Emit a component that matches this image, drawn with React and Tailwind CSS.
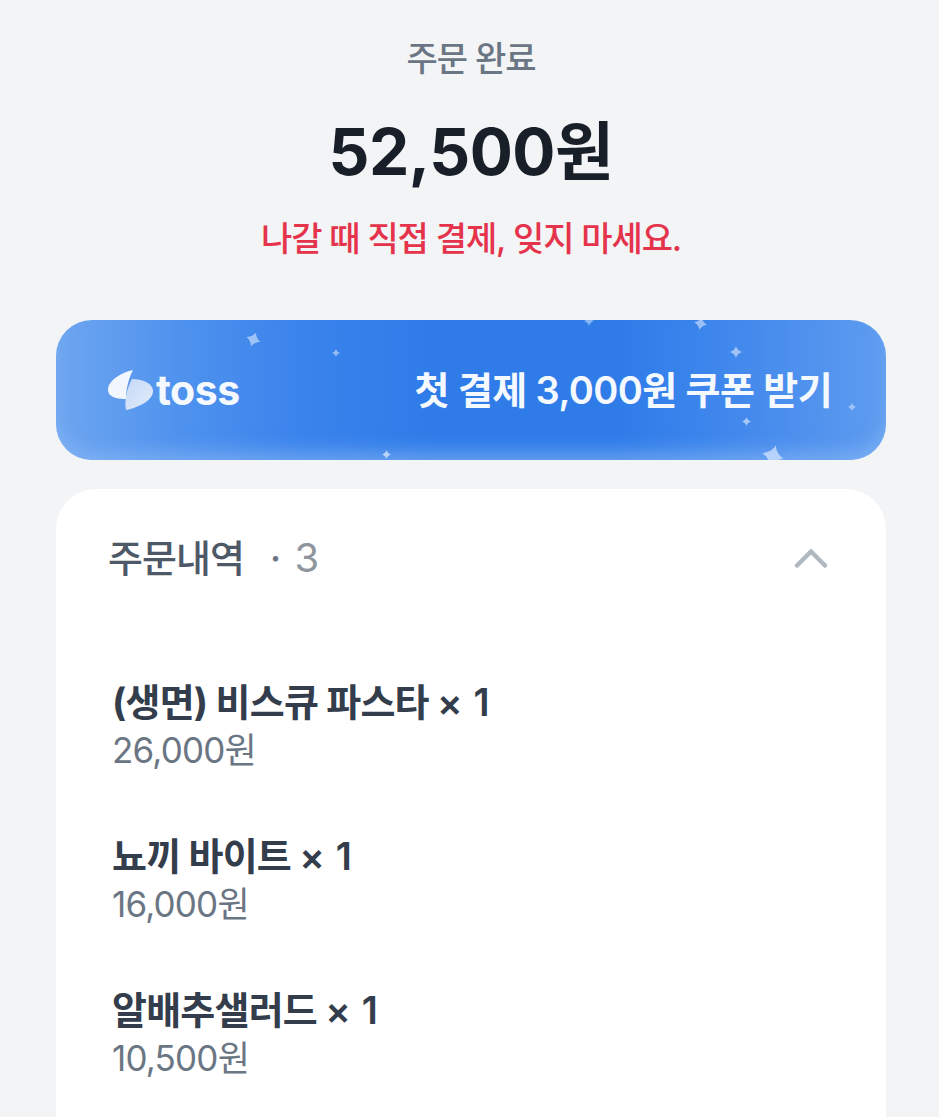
const KR = "font-['Inter','Noto_Sans_CJK_KR',sans-serif]";

const stars = [
  { x: 190, y: 12, s: 15, o: 0.6, r: 20 },
  { x: 276, y: 29, s: 8, o: 0.55, r: 0 },
  { x: 528, y: -4, s: 10, o: 0.5, r: 0 },
  { x: 638, y: -3, s: 13, o: 0.6, r: 10 },
  { x: 674, y: 26, s: 12, o: 0.6, r: 0 },
  { x: 686, y: 97, s: 9, o: 0.65, r: 0 },
  { x: 792, y: 83, s: 8, o: 0.55, r: 0 },
  { x: 326, y: 130, s: 9, o: 0.75, r: 0 },
  { x: 706, y: 125, s: 22, o: 0.7, r: 15 },
];

const orders = [
  { name: '(생면) 비스큐 파스타', price: '26,000원' },
  { name: '뇨끼 바이트', price: '16,000원' },
  { name: '알배추샐러드', price: '10,500원' },
];

function Star({ x, y, s, o, r }) {
  return (
    <svg
      className="absolute"
      style={{ left: x, top: y, opacity: o, transform: `rotate(${r}deg)` }}
      width={s}
      height={s}
      viewBox="0 0 12 12"
    >
      <path d="M6 0 C6.8 2.8 9 5 12 6 C9 7 6.8 9.2 6 12 C5.2 9.2 3 7 0 6 C3 5 5.2 2.8 6 0Z" fill="#dbe9ff" />
    </svg>
  );
}

function TossLogo() {
  return (
    <div className="flex items-center">
      <svg width="45" height="40" viewBox="0 0 45 40">
        <defs>
          <linearGradient id="tossRight" x1="0" y1="0" x2="1" y2="1">
            <stop offset="0" stopColor="#c4d8f6" />
            <stop offset="1" stopColor="#e3edfb" />
          </linearGradient>
        </defs>
        <path d="M25 0 C15 2 0 10 0 20 C0 26 7 29 17 29 L18 29 C18 18 21 8 25 0Z" fill="#f2f7fe" />
        <path d="M24 9 C36 9 45 14 45 21 C45 30 32 37 18 40 C16 30 19 18 24 9Z" fill="url(#tossRight)" />
      </svg>
      <span className="ml-[3px] text-[41px] leading-none font-bold tracking-[-0.5px] text-[#f4f8ff] font-['Inter',sans-serif]">
        toss
      </span>
    </div>
  );
}

export default function App() {
  return (
    <div className={`h-[1117px] overflow-hidden bg-[#f2f4f6] pr-[53px] pl-[56px] ${KR}`}>
      <div className="flex flex-col items-center pt-[36px]">
        <p className="text-[34px] leading-[46px] font-medium tracking-[-1px] text-[#6b7684]">주문 완료</p>
        <p className="mt-[32px] text-[64px] leading-[76px] font-bold tracking-[-0.5px] text-[#191f28]">52,500원</p>
        <p className="mt-[26px] text-[34px] leading-[46px] font-medium tracking-[-1.1px] text-[#e5334b]">
          나갈 때 직접 결제, 잊지 마세요.
        </p>
      </div>

      <div className="relative mt-[58px] flex h-[140px] items-center justify-between overflow-hidden rounded-[36px] bg-[linear-gradient(90deg,#6ea6f0_0%,#4f92ee_15%,#3a83ec_30%,#2f7ce9_45%,#2f7ce9_68%,#3c85ec_78%,#5293ee_92%,#5f9df0_100%)] pr-[54px] pl-[52px] shadow-[inset_0_-12px_18px_-4px_rgba(140,185,245,0.6)]">
        {stars.map((star, i) => (
          <Star key={i} {...star} />
        ))}
        <TossLogo />
        <span className="text-[38px] leading-none font-semibold tracking-[-0.6px] text-[#f4f8ff]">
          첫 결제 3,000원 쿠폰 받기
        </span>
      </div>

      <div className="mt-[29px] h-[700px] rounded-t-[40px] bg-white px-[52px] pt-[46px]">
        <div className="flex items-center justify-between pr-[7px]">
          <div className="flex items-center text-[38px] leading-[46px] font-medium tracking-[-1px]">
            <span className="text-[#4e5968]">주문내역</span>
            <span className="ml-[26px] text-[#6b7684]">·</span>
            <span className="ml-[14px] text-[40px] font-normal text-[#8f959c]">3</span>
          </div>
          <svg width="34" height="20" viewBox="0 0 34 20" fill="none">
            <path d="M4 17.5 L18 3.5 L32 17.5" stroke="#b0b8c1" strokeWidth="4.5" strokeLinecap="round" strokeLinejoin="round" />
          </svg>
        </div>

        <div className="mt-[97px] flex flex-col gap-[59px] pl-[4px]">
          {orders.map((order) => (
            <div key={order.name}>
              <p className="text-[38px] leading-[48px] font-bold tracking-[-0.8px] text-[#333d4b]">
                {order.name} <span className="font-semibold [word-spacing:3px]">× 1</span>
              </p>
              <p className="mt-px text-[35px] leading-[46px] font-normal tracking-[-0.8px] text-[#6b7684]">{order.price}</p>
            </div>
          ))}
        </div>
      </div>
    </div>
  );
}
